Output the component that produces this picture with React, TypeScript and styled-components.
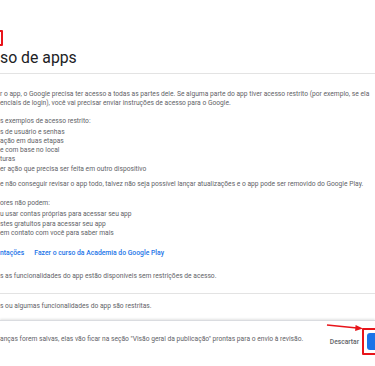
import React from "react";
import styled, { createGlobalStyle } from "styled-components";

const Global = createGlobalStyle`
  html, body { margin: 0; padding: 0; background: #fff; }
  * { box-sizing: border-box; }
`;

const Page = styled.div`
  width: 375px;
  height: 366px;
  overflow: hidden;
  background: #fff;
  font-family: Roboto, "Liberation Sans", sans-serif;
  color: #5f6368;
  display: flex;
  flex-direction: column;
`;

const Header = styled.header`
  height: 74px;
  padding-top: 30px;
  border-bottom: 1px solid #e3e3e3;
  display: flex;
  flex-direction: column;
`;

const Crumbs = styled.div`
  height: 16px;
  display: flex;
`;

const MarkBox = styled.span`
  display: block;
  width: 22px;
  height: 16px;
  margin-left: -19px;
  border: 2px solid #e8141a;
  border-radius: 1px;
`;

const Title = styled.h1`
  margin: 2px 0 0;
  font-size: 15.8px;
  line-height: 20px;
  font-weight: 400;
  color: #202124;
  white-space: nowrap;
`;

const Content = styled.main`
  padding-top: 16px;
  display: flex;
  flex-direction: column;
`;

const Para = styled.p<{ $gap?: number }>`
  margin: ${(p) => p.$gap ?? 0}px 0 0;
  font-size: 6.7px;
  line-height: 9.3px;
  white-space: nowrap;
`;

const List = styled.ul`
  margin: 1.7px 0 0;
  padding: 0;
  list-style: none;
  font-size: 6.7px;
  line-height: 9.3px;
  white-space: nowrap;
`;

const Links = styled.div`
  margin-top: 11px;
  display: flex;
  gap: 10px;
  font-size: 6.8px;
  line-height: 9.3px;
  font-weight: 500;
  color: #1a73e8;
  white-space: nowrap;
`;

const Options = styled.div`
  margin-top: 13px;
  display: flex;
  flex-direction: column;
`;

const Option = styled.div<{ $top: number; $bottom: number; $line?: boolean }>`
  padding: ${(p) => p.$top}px 0 ${(p) => p.$bottom}px;
  font-size: 6.7px;
  line-height: 9.3px;
  white-space: nowrap;
  border-bottom: ${(p) => (p.$line ? "1px solid #e3e3e3" : "none")};
`;

const Footer = styled.footer`
  flex: 1;
  border-top: 1px solid #dadce0;
  box-shadow: 0 -1px 2px rgba(60, 64, 67, 0.15);
  display: flex;
  align-items: flex-start;
  padding-top: 5px;
  position: relative;
`;

const FooterText = styled.span`
  flex: 1;
  font-size: 6.7px;
  line-height: 9.3px;
  margin-top: 9px;
  white-space: nowrap;
`;

const Discard = styled.span`
  font-size: 6.7px;
  line-height: 9.3px;
  font-weight: 500;
  color: #5f6368;
  margin-top: 12px;
  margin-right: 3px;
`;

const ButtonMark = styled.div`
  margin-top: 2px;
  margin-right: -12px;
  padding: 3px;
  border: 2px solid #e8141a;
  border-radius: 1px;
  width: 25px;
  height: 27px;
`;

const Primary = styled.div`
  width: 100%;
  height: 17px;
  background: #1a73e8;
  border-radius: 3px;
`;

const Arrow = styled.svg`
  position: absolute;
  left: 326px;
  top: 1px;
`;

export default function App() {
  return (
    <>
      <Global />
      <Page>
        <Header>
          <Crumbs>
            <MarkBox />
          </Crumbs>
          <Title>so de apps</Title>
        </Header>
        <Content>
          <Para>
            r o app, o Google precisa ter acesso a todas as partes dele. Se alguma parte do app tiver acesso restrito (por exemplo, se ela
            <br />
            enciais de login), você vai precisar enviar instruções de acesso para o Google.
          </Para>
          <Para $gap={8}>s exemplos de acesso restrito:</Para>
          <List>
            <li>s de usuário e senhas</li>
            <li>ação em duas etapas</li>
            <li>e com base no local</li>
            <li>turas</li>
            <li>er ação que precisa ser feita em outro dispositivo</li>
          </List>
          <Para $gap={6.3}>
            e não conseguir revisar o app todo, talvez não seja possível lançar atualizações e o app pode ser removido do Google Play.
          </Para>
          <Para $gap={9.7}>ores não podem:</Para>
          <List>
            <li>u usar contas próprias para acessar seu app</li>
            <li>stes gratuitos para acessar seu app</li>
            <li>em contato com você para saber mais</li>
          </List>
          <Links>
            <span>ntações</span>
            <span>Fazer o curso da Academia do Google Play</span>
          </Links>
          <Options>
            <Option $top={0} $bottom={12} $line>
              s as funcionalidades do app estão disponíveis sem restrições de acesso.
            </Option>
            <Option $top={8} $bottom={9}>
              s ou algumas funcionalidades do app são restritas.
            </Option>
          </Options>
        </Content>
        <Footer>
          <FooterText>
            anças forem salvas, elas vão ficar na seção "Visão geral da publicação" prontas para o envio à revisão.
          </FooterText>
          <Discard>Descartar</Discard>
          <ButtonMark>
            <Primary />
          </ButtonMark>
          <Arrow width="38" height="10" viewBox="0 0 38 10">
            <line x1="1" y1="3" x2="31" y2="6" stroke="#e8141a" strokeWidth="1.6" />
            <polygon points="37,6.6 29.6,3 29.1,9" fill="#e8141a" />
          </Arrow>
        </Footer>
      </Page>
    </>
  );
}
